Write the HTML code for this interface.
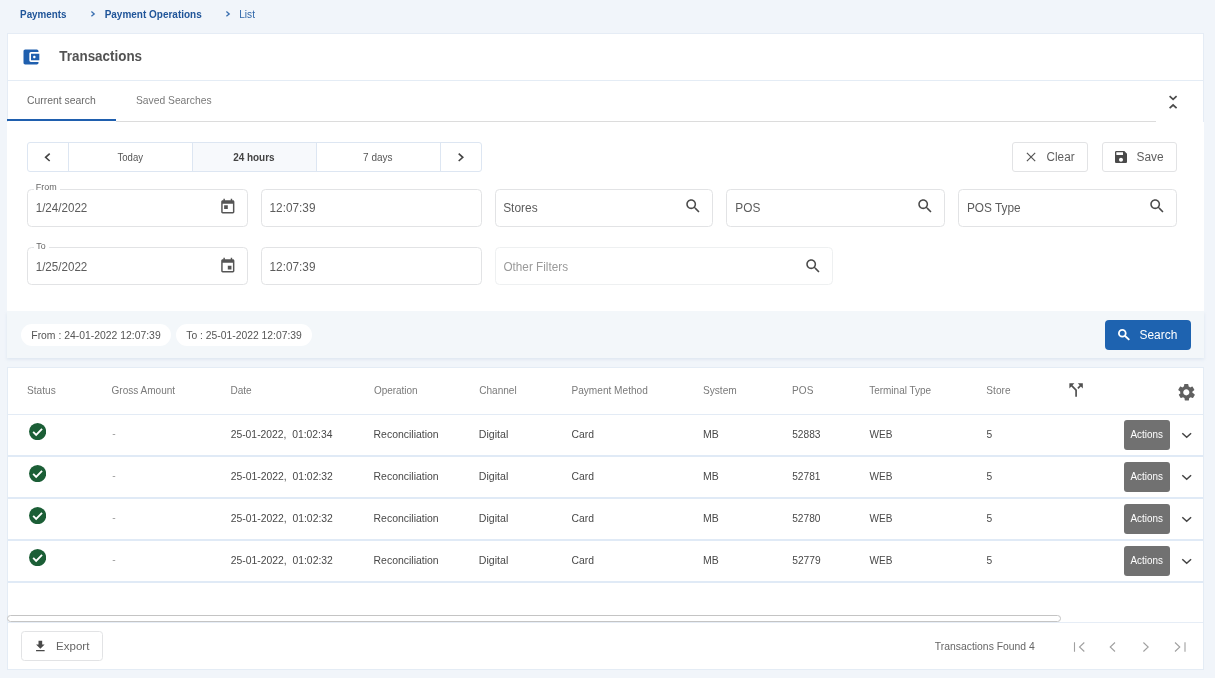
<!DOCTYPE html>
<html><head><meta charset="utf-8"><title>Transactions</title>
<style>
*{box-sizing:border-box;margin:0;padding:0}
html,body{width:1215px;height:678px;overflow:hidden}
body{background:#f1f5fa;font-family:"Liberation Sans",Arial,sans-serif;position:relative}
.abs{position:absolute}
.t{position:absolute;white-space:nowrap;line-height:20px;transform-origin:0 0}
#w{position:absolute;left:0;top:0;width:1215px;height:678px;filter:blur(.4px)}
</style></head><body><div id="w">
<svg class="abs" style="left:89.9px;top:10px" width="6" height="8" viewBox="0 0 6 8"><path d="M1.400 1.600L4.200 3.900 1.400 6.200" fill="none" stroke="#3a6fb0" stroke-width="1.300"/></svg>
<svg class="abs" style="left:225px;top:10px" width="6" height="8" viewBox="0 0 6 8"><path d="M1.400 1.600L4.200 3.900 1.400 6.200" fill="none" stroke="#3a6fb0" stroke-width="1.300"/></svg>
<div class="abs" style="left:6.8px;top:121px;width:1197.4px;height:189.5px;background:#fff"></div>
<div class="abs" style="left:6.8px;top:33.3px;width:1196.8px;height:88.7px;background:#fff;border:1px solid #e5ecf5;border-bottom:none"></div>
<div class="abs" style="left:6.8px;top:79.8px;width:1196.8px;height:1.0px;background:#e4ecf5"></div>
<svg class="abs" style="left:21.2px;top:46.8px" width="20" height="20" viewBox="0 0 24 24"><path fill="#1f5fae" d="M21 18v1c0 1.100-.9 2-2 2H5c-1.110 0-2-.9-2-2V5c0-1.100.890-2 2-2h14c1.100 0 2 .9 2 2v1h-9c-1.110 0-2 .9-2 2v8c0 1.100.890 2 2 2h9zm-9-2h10V8H12v8zm4-2.500c-.830 0-1.500-.670-1.500-1.500s.670-1.500 1.500-1.500 1.500.670 1.500 1.500-.670 1.500-1.500 1.500z"/></svg>
<div class="abs" style="left:116px;top:120.5px;width:1040px;height:1.0px;background:#dcdcdc"></div>
<div class="abs" style="left:6.8px;top:118.5px;width:109.2px;height:2.5px;background:#1f5fae"></div>
<svg class="abs" style="left:1167px;top:94px" width="12" height="16" viewBox="0 0 12 16"><path d="M2.600 2.200L6.100 5.400 9.600 2.200M2.600 14.200L6.100 11 9.600 14.200" fill="none" stroke="#4a4a4a" stroke-width="1.700"/></svg>
<div class="abs" style="left:27.3px;top:142px;width:454.4px;height:29.5px;background:#fff;border:1px solid #dde6f2;border-radius:3px"></div>
<div class="abs" style="left:192.5px;top:143px;width:123.5px;height:27.5px;background:#f7f9fc"></div>
<div class="abs" style="left:67.8px;top:143px;width:0.8000000000000114px;height:27.5px;background:#dde6f2"></div>
<div class="abs" style="left:191.79999999999998px;top:143px;width:0.8000000000000114px;height:27.5px;background:#dde6f2"></div>
<div class="abs" style="left:315.6px;top:143px;width:0.7999999999999545px;height:27.5px;background:#dde6f2"></div>
<div class="abs" style="left:439.8px;top:143px;width:0.7999999999999545px;height:27.5px;background:#dde6f2"></div>
<svg class="abs" style="left:42px;top:150.5px" width="11" height="12" viewBox="0 0 11 12"><path d="M7.700 2.600L3.600 6.300l4.100 3.700" fill="none" stroke="#444" stroke-width="1.600"/></svg>
<svg class="abs" style="left:455px;top:150.5px" width="11" height="12" viewBox="0 0 11 12"><path d="M3.700 2.600l4.100 3.700-4.100 3.700" fill="none" stroke="#444" stroke-width="1.600"/></svg>
<div class="abs" style="left:1012.3px;top:142px;width:75.70000000000005px;height:29.5px;background:#fff;border:1px solid #e2e3e5;border-radius:3px"></div>
<svg class="abs" style="left:1025px;top:151px" width="12" height="12" viewBox="0 0 12 12"><path d="M1.900 1.900l8.300 8.300M10.200 1.900l-8.300 8.300" stroke="#555" stroke-width="1.200" fill="none"/></svg>
<div class="abs" style="left:1102px;top:142px;width:75px;height:29.5px;background:#fff;border:1px solid #e2e3e5;border-radius:3px"></div>
<svg class="abs" style="left:1112.8px;top:148.8px" width="16" height="16" viewBox="0 0 24 24"><path fill="#4a4a4a" d="M17 3H5c-1.110 0-2 .9-2 2v14c0 1.100.890 2 2 2h14c1.100 0 2-.9 2-2V7l-4-4zm-5 16c-1.660 0-3-1.340-3-3s1.340-3 3-3 3 1.340 3 3-1.340 3-3 3zm3-10H5V5h10v4z"/></svg>
<div class="abs" style="left:27.3px;top:188.8px;width:220.6px;height:37.89999999999998px;background:#fff;border:1px solid #e2e3e5;border-radius:4.5px"></div>
<div class="abs" style="left:261.2px;top:188.8px;width:220.5px;height:37.89999999999998px;background:#fff;border:1px solid #e2e3e5;border-radius:4.5px"></div>
<div class="abs" style="left:27.3px;top:247.2px;width:220.6px;height:37.60000000000002px;background:#fff;border:1px solid #e2e3e5;border-radius:4.5px"></div>
<div class="abs" style="left:261.2px;top:247.2px;width:220.5px;height:37.60000000000002px;background:#fff;border:1px solid #e2e3e5;border-radius:4.5px"></div>
<div class="abs" style="left:494.8px;top:188.8px;width:218.2px;height:37.89999999999998px;background:#fff;border:1px solid #e2e3e5;border-radius:4.5px"></div>
<div class="abs" style="left:726.2px;top:188.8px;width:218.79999999999995px;height:37.89999999999998px;background:#fff;border:1px solid #e2e3e5;border-radius:4.5px"></div>
<div class="abs" style="left:958.3px;top:188.8px;width:218.70000000000005px;height:37.89999999999998px;background:#fff;border:1px solid #e2e3e5;border-radius:4.5px"></div>
<div class="abs" style="left:494.8px;top:247.2px;width:337.99999999999994px;height:37.60000000000002px;background:#fff;border:1px solid #eef0f1;border-radius:4.5px"></div>
<div class="abs" style="left:33.5px;top:187px;width:26.0px;height:5px;background:#fff"></div>
<div class="abs" style="left:33.5px;top:245.5px;width:15.0px;height:5.0px;background:#fff"></div>
<svg class="abs" style="left:218.7px;top:197.9px" width="17.6" height="17.6" viewBox="0 0 24 24"><path fill="#555" d="M19 3h-1V1h-2v2H8V1H6v2H5c-1.110 0-1.990.9-1.990 2L3 19c0 1.100.890 2 2 2h14c1.100 0 2-.9 2-2V5c0-1.100-.9-2-2-2zm0 16H5V8h14v11zM7 10h5v5H7z"/></svg>
<svg class="abs" style="left:218.7px;top:257.3px" width="17.6" height="17.6" viewBox="0 0 24 24"><path fill="#555" d="M17 12h-5v5h5v-5zM16 1v2H8V1H6v2H5c-1.110 0-1.990.9-1.990 2L3 19c0 1.100.890 2 2 2h14c1.100 0 2-.9 2-2V5c0-1.100-.9-2-2-2h-1V1h-2zm3 18H5V8h14v11z"/></svg>
<svg class="abs" style="left:684.1px;top:197.1px" width="18.2" height="18.2" viewBox="0 0 24 24"><path fill="#4a4a4a" d="M15.500 14h-.790l-.280-.270C15.410 12.590 16 11.110 16 9.500 16 5.910 13.090 3 9.500 3S3 5.910 3 9.500 5.910 16 9.500 16c1.610 0 3.090-.590 4.230-1.570l.270.280v.790l5 4.990L20.490 19l-4.990-5zm-6 0C7.010 14 5 11.990 5 9.500S7.010 5 9.500 5 14 7.010 14 9.500 11.990 14 9.500 14z"/></svg>
<svg class="abs" style="left:915.9000000000001px;top:197.1px" width="18.2" height="18.2" viewBox="0 0 24 24"><path fill="#4a4a4a" d="M15.500 14h-.790l-.280-.270C15.410 12.590 16 11.110 16 9.500 16 5.910 13.090 3 9.500 3S3 5.910 3 9.500 5.910 16 9.500 16c1.610 0 3.090-.590 4.230-1.570l.270.280v.790l5 4.990L20.490 19l-4.990-5zm-6 0C7.010 14 5 11.990 5 9.500S7.010 5 9.500 5 14 7.010 14 9.500 11.990 14 9.500 14z"/></svg>
<svg class="abs" style="left:1147.9px;top:197.1px" width="18.2" height="18.2" viewBox="0 0 24 24"><path fill="#4a4a4a" d="M15.500 14h-.790l-.280-.270C15.410 12.590 16 11.110 16 9.500 16 5.910 13.090 3 9.500 3S3 5.910 3 9.500 5.910 16 9.500 16c1.610 0 3.090-.590 4.230-1.570l.270.280v.790l5 4.990L20.490 19l-4.990-5zm-6 0C7.010 14 5 11.990 5 9.500S7.010 5 9.500 5 14 7.010 14 9.500 11.990 14 9.500 14z"/></svg>
<svg class="abs" style="left:803.7px;top:257.09999999999997px" width="18.2" height="18.2" viewBox="0 0 24 24"><path fill="#4a4a4a" d="M15.500 14h-.790l-.280-.270C15.410 12.590 16 11.110 16 9.500 16 5.910 13.090 3 9.500 3S3 5.910 3 9.500 5.910 16 9.500 16c1.610 0 3.090-.590 4.230-1.570l.270.280v.790l5 4.990L20.490 19l-4.990-5zm-6 0C7.010 14 5 11.990 5 9.500S7.010 5 9.500 5 14 7.010 14 9.500 11.990 14 9.500 14z"/></svg>
<div class="abs" style="left:6.8px;top:310.5px;width:1197.4px;height:47.69999999999999px;background:#f3f7fa;box-shadow:0 1.500px 3px rgba(170,190,215,.28)"></div>
<div class="abs" style="left:20.8px;top:324px;width:150.2px;height:22px;background:#fff;border-radius:11px"></div>
<div class="abs" style="left:176.2px;top:324px;width:136.2px;height:22px;background:#fff;border-radius:11px"></div>
<div class="abs" style="left:1105px;top:320px;width:85.70000000000005px;height:30.19999999999999px;background:#1e63b0;border-radius:4px"></div>
<svg class="abs" style="left:1116px;top:327px" width="16" height="16" viewBox="0 0 16 16"><circle cx="6.300" cy="6.300" r="3.400" fill="none" stroke="#fff" stroke-width="1.800"/><path d="M8.800 8.800L13.300 12.900" stroke="#fff" stroke-width="1.900" fill="none"/></svg>
<div class="abs" style="left:6.8px;top:366.5px;width:1197.2px;height:303.70000000000005px;background:#fff;border:1px solid #e4ecf5"></div>
<div class="abs" style="left:8px;top:414px;width:1195px;height:1px;background:#e3ebf5"></div>
<div class="abs" style="left:8px;top:454.9px;width:1195px;height:2.0px;background:#e0eaf6"></div>
<svg class="abs" style="left:29px;top:423.2px" width="17.2" height="17.2" viewBox="0 0 24 24"><circle cx="12" cy="12" r="12" fill="#1b5e36"/><path d="M5.800 12.400l4.200 4.200 8.200-8.300" fill="none" stroke="#fff" stroke-width="2.600"/></svg>
<div class="abs" style="left:1124.3px;top:419.7px;width:45.700000000000045px;height:30.100000000000023px;background:#717171;border-radius:3px"></div>
<svg class="abs" style="left:1180.6px;top:431.5px" width="12" height="8" viewBox="0 0 12 8"><path d="M1.300 1.200L5.700 5.300 10.100 1.200" fill="none" stroke="#444" stroke-width="1.500"/></svg>
<div class="abs" style="left:8px;top:496.79999999999995px;width:1195px;height:2.0px;background:#e0eaf6"></div>
<svg class="abs" style="left:29px;top:465.2px" width="17.2" height="17.2" viewBox="0 0 24 24"><circle cx="12" cy="12" r="12" fill="#1b5e36"/><path d="M5.800 12.400l4.200 4.200 8.200-8.300" fill="none" stroke="#fff" stroke-width="2.600"/></svg>
<div class="abs" style="left:1124.3px;top:461.7px;width:45.700000000000045px;height:30.100000000000023px;background:#717171;border-radius:3px"></div>
<svg class="abs" style="left:1180.6px;top:473.5px" width="12" height="8" viewBox="0 0 12 8"><path d="M1.300 1.200L5.700 5.300 10.100 1.200" fill="none" stroke="#444" stroke-width="1.500"/></svg>
<div class="abs" style="left:8px;top:538.6999999999999px;width:1195px;height:2.0px;background:#e0eaf6"></div>
<svg class="abs" style="left:29px;top:507.2px" width="17.2" height="17.2" viewBox="0 0 24 24"><circle cx="12" cy="12" r="12" fill="#1b5e36"/><path d="M5.800 12.400l4.200 4.200 8.200-8.300" fill="none" stroke="#fff" stroke-width="2.600"/></svg>
<div class="abs" style="left:1124.3px;top:503.7px;width:45.700000000000045px;height:30.099999999999966px;background:#717171;border-radius:3px"></div>
<svg class="abs" style="left:1180.6px;top:515.5px" width="12" height="8" viewBox="0 0 12 8"><path d="M1.300 1.200L5.700 5.300 10.100 1.200" fill="none" stroke="#444" stroke-width="1.500"/></svg>
<div class="abs" style="left:8px;top:580.5999999999999px;width:1195px;height:2.0px;background:#e0eaf6"></div>
<svg class="abs" style="left:29px;top:549.2px" width="17.2" height="17.2" viewBox="0 0 24 24"><circle cx="12" cy="12" r="12" fill="#1b5e36"/><path d="M5.800 12.400l4.200 4.200 8.200-8.300" fill="none" stroke="#fff" stroke-width="2.600"/></svg>
<div class="abs" style="left:1124.3px;top:545.7px;width:45.700000000000045px;height:30.09999999999991px;background:#717171;border-radius:3px"></div>
<svg class="abs" style="left:1180.6px;top:557.5px" width="12" height="8" viewBox="0 0 12 8"><path d="M1.300 1.200L5.700 5.300 10.100 1.200" fill="none" stroke="#444" stroke-width="1.500"/></svg>
<svg class="abs" style="left:1066.2px;top:380.1px" width="20.2" height="20.2" viewBox="0 0 24 24"><path fill="#505050" d="M14 4l2.290 2.290-2.880 2.880 1.420 1.420 2.880-2.880L20 10V4zm-4 0H4v6l2.290-2.290 4.710 4.700V20h2v-8.410l-5.290-5.300z"/></svg>
<svg class="abs" style="left:1175.9px;top:381.59999999999997px" width="20.6" height="20.6" viewBox="0 0 24 24"><path fill="#606060" d="M19.140 12.940c.040-.3.060-.610.060-.940 0-.320-.020-.640-.070-.940l2.030-1.580a.490.490 0 0 0 .120-.610l-1.920-3.320a.488.488 0 0 0-.590-.220l-2.390.960c-.500-.380-1.030-.700-1.620-.940l-.360-2.540a.484.484 0 0 0-.480-.410h-3.840c-.240 0-.430.170-.470.410l-.360 2.540c-.590.240-1.130.570-1.620.940l-2.390-.960c-.220-.080-.470 0-.590.220L2.740 8.870c-.120.210-.080.470.12.610l2.030 1.580c-.050.300-.090.630-.090.940s.2.640.7.940l-2.030 1.580a.490.490 0 0 0-.120.610l1.920 3.320c.120.220.370.290.590.220l2.390-.960c.500.380 1.030.700 1.620.940l.360 2.540c.5.240.240.410.480.410h3.840c.240 0 .440-.170.470-.410l.360-2.540c.590-.240 1.130-.560 1.620-.940l2.390.960c.220.080.470 0 .590-.220l1.920-3.320c.120-.220.070-.470-.120-.610l-2.010-1.580zM12 15.600c-1.980 0-3.600-1.620-3.600-3.600s1.620-3.600 3.600-3.600 3.600 1.620 3.600 3.600-1.620 3.600-3.600 3.600z"/></svg>
<div class="abs" style="left:7.2px;top:615.2px;width:1053.6px;height:7.099999999999909px;background:#fff;border:1.300px solid #c4c4c4;border-radius:3.5px"></div>
<div class="abs" style="left:8px;top:622px;width:1195px;height:1px;background:#e6edf6"></div>
<div class="abs" style="left:21px;top:631.1px;width:82px;height:29.899999999999977px;background:#fff;border:1px solid #e2e3e5;border-radius:3.5px"></div>
<svg class="abs" style="left:33.099999999999994px;top:638.9px" width="14.7" height="14.7" viewBox="0 0 24 24"><path fill="#4a4a4a" d="M19 9h-4V3H9v6H5l7 7 7-7zM5 18v2h14v-2H5z"/></svg>
<svg class="abs" style="left:1072px;top:640px" width="15" height="14" viewBox="0 0 15 14"><path d="M2.500 2.300v9.400M12.300 2.500L7.500 7l4.800 4.500" fill="none" stroke="#a0a0a0" stroke-width="1.100"/></svg>
<svg class="abs" style="left:1106px;top:640px" width="14" height="14" viewBox="0 0 14 14"><path d="M9 2.500L4.200 7l4.800 4.500" fill="none" stroke="#a0a0a0" stroke-width="1.100"/></svg>
<svg class="abs" style="left:1139px;top:640px" width="14" height="14" viewBox="0 0 14 14"><path d="M4.400 2.500L9.200 7l-4.800 4.500" fill="none" stroke="#a0a0a0" stroke-width="1.100"/></svg>
<svg class="abs" style="left:1172px;top:640px" width="15" height="14" viewBox="0 0 15 14"><path d="M13 2.300v9.400M3 2.500L7.800 7l-4.800 4.500" fill="none" stroke="#a0a0a0" stroke-width="1.100"/></svg>
<span class="t" style="left:20px;top:4px;font-size:11px;color:#205599;font-weight:bold;transform:translate(0.09px,0.00px) scaleX(0.8939)">Payments</span>
<span class="t" style="left:104px;top:4px;font-size:11px;color:#205599;font-weight:bold;transform:translate(0.66px,0.00px) scaleX(0.9077)">Payment Operations</span>
<span class="t" style="left:239px;top:4px;font-size:11px;color:#2f66a8;transform:translate(0.24px,0.00px) scaleX(0.9185)">List</span>
<span class="t" style="left:59px;top:46px;font-size:14px;color:#535353;font-weight:bold;transform:translate(0.37px,0.00px) scaleX(0.9569)">Transactions</span>
<span class="t" style="left:26px;top:90px;font-size:11px;color:#6a6a6a;transform:translate(0.91px,0.00px) scaleX(0.9463)">Current search</span>
<span class="t" style="left:135px;top:90px;font-size:11px;color:#7a7a7a;transform:translate(0.93px,0.00px) scaleX(0.9369)">Saved Searches</span>
<span class="t" style="left:117px;top:147px;font-size:10.5px;color:#555;transform:translate(0.49px,0.00px) scaleX(0.9101)">Today</span>
<span class="t" style="left:233px;top:147px;font-size:10.5px;color:#444;font-weight:bold;transform:translate(0.13px,0.00px) scaleX(0.9475)">24 hours</span>
<span class="t" style="left:363px;top:147px;font-size:10.5px;color:#555;transform:translate(0.11px,0.00px) scaleX(0.9513)">7 days</span>
<span class="t" style="left:1046px;top:147px;font-size:12px;color:#5e5e5e;transform:translate(0.56px,0.00px) scaleX(0.9757)">Clear</span>
<span class="t" style="left:1136px;top:147px;font-size:12px;color:#5e5e5e;transform:translate(0.48px,0.00px) scaleX(0.9913)">Save</span>
<span class="t" style="left:35px;top:177px;font-size:8.5px;color:#666;transform:translate(0.81px,0.00px) scaleX(1.0547)">From</span>
<span class="t" style="left:36px;top:236px;font-size:8.5px;color:#666;transform:translate(0.23px,0.00px) scaleX(1.0373)">To</span>
<span class="t" style="left:35px;top:197px;font-size:12.5px;color:#5c5c5c;transform:translate(0.69px,0.60px) scaleX(0.9284)">1/24/2022</span>
<span class="t" style="left:35px;top:257px;font-size:12.5px;color:#5c5c5c;transform:translate(0.69px,0.40px) scaleX(0.9284)">1/25/2022</span>
<span class="t" style="left:269px;top:197px;font-size:12.5px;color:#5c5c5c;transform:translate(0.56px,0.60px) scaleX(0.9436)">12:07:39</span>
<span class="t" style="left:269px;top:257px;font-size:12.5px;color:#5c5c5c;transform:translate(0.56px,0.40px) scaleX(0.9436)">12:07:39</span>
<span class="t" style="left:503px;top:197px;font-size:12.5px;color:#5c5c5c;transform:translate(0.14px,0.60px) scaleX(0.9545)">Stores</span>
<span class="t" style="left:735px;top:197px;font-size:12.5px;color:#5c5c5c;transform:translate(0.30px,0.60px) scaleX(0.9478)">POS</span>
<span class="t" style="left:966px;top:197px;font-size:12.5px;color:#5c5c5c;transform:translate(0.91px,0.60px) scaleX(0.9478)">POS Type</span>
<span class="t" style="left:503px;top:257px;font-size:12.5px;color:#9a9a9a;transform:translate(0.43px,0.40px) scaleX(0.9391)">Other Filters</span>
<span class="t" style="left:31px;top:325px;font-size:11px;color:#555;transform:translate(0.28px,0.00px) scaleX(0.9446)">From : 24-01-2022 12:07:39</span>
<span class="t" style="left:186px;top:325px;font-size:11px;color:#555;transform:translate(0.24px,0.00px) scaleX(0.9405)">To : 25-01-2022 12:07:39</span>
<span class="t" style="left:1139px;top:325px;font-size:12px;color:#fff;transform:translate(0.48px,0.00px) scaleX(0.9953)">Search</span>
<span class="t" style="left:27px;top:380px;font-size:11px;color:#7a7a7a;transform:translate(0.06px,0.40px) scaleX(0.9194)">Status</span>
<span class="t" style="left:111px;top:380px;font-size:11px;color:#7a7a7a;transform:translate(0.56px,0.40px) scaleX(0.9116)">Gross Amount</span>
<span class="t" style="left:230px;top:380px;font-size:11px;color:#7a7a7a;transform:translate(0.39px,0.40px) scaleX(0.9156)">Date</span>
<span class="t" style="left:373px;top:380px;font-size:11px;color:#7a7a7a;transform:translate(0.88px,0.40px) scaleX(0.9063)">Operation</span>
<span class="t" style="left:479px;top:380px;font-size:11px;color:#7a7a7a;transform:translate(0.23px,0.40px) scaleX(0.9137)">Channel</span>
<span class="t" style="left:571px;top:380px;font-size:11px;color:#7a7a7a;transform:translate(0.44px,0.40px) scaleX(0.9183)">Payment Method</span>
<span class="t" style="left:702px;top:380px;font-size:11px;color:#7a7a7a;transform:translate(0.88px,0.40px) scaleX(0.9237)">System</span>
<span class="t" style="left:792px;top:380px;font-size:11px;color:#7a7a7a;transform:translate(0.08px,0.40px) scaleX(0.9157)">POS</span>
<span class="t" style="left:869px;top:380px;font-size:11px;color:#7a7a7a;transform:translate(0.16px,0.40px) scaleX(0.9083)">Terminal Type</span>
<span class="t" style="left:986px;top:380px;font-size:11px;color:#7a7a7a;transform:translate(0.36px,0.40px) scaleX(0.9191)">Store</span>
<span class="t" style="left:112px;top:423px;font-size:11px;color:#999;transform:translate(0.20px,0.40px) scaleX(0.9300)">-</span>
<span class="t" style="left:230px;top:424px;font-size:11px;color:#484848;transform:translate(0.67px,0.40px) scaleX(0.9404)">25-01-2022,&nbsp; 01:02:34</span>
<span class="t" style="left:373px;top:424px;font-size:11px;color:#484848;transform:translate(0.55px,0.40px) scaleX(0.9504)">Reconciliation</span>
<span class="t" style="left:478px;top:424px;font-size:11px;color:#484848;transform:translate(0.76px,0.40px) scaleX(0.9644)">Digital</span>
<span class="t" style="left:571px;top:424px;font-size:11px;color:#484848;transform:translate(0.55px,0.40px) scaleX(0.9423)">Card</span>
<span class="t" style="left:703px;top:424px;font-size:11px;color:#484848;transform:translate(0.01px,0.40px) scaleX(0.9537)">MB</span>
<span class="t" style="left:792px;top:424px;font-size:11px;color:#484848;transform:translate(0.22px,0.40px) scaleX(0.9234)">52883</span>
<span class="t" style="left:869px;top:424px;font-size:11px;color:#484848;transform:translate(0.48px,0.40px) scaleX(0.9145)">WEB</span>
<span class="t" style="left:986px;top:424px;font-size:11px;color:#484848;transform:translate(0.61px,0.40px) scaleX(0.9300)">5</span>
<span class="t" style="left:1130px;top:424px;font-size:10.5px;color:#fff;transform:translate(0.45px,0.40px) scaleX(0.9405)">Actions</span>
<span class="t" style="left:112px;top:465px;font-size:11px;color:#999;transform:translate(0.20px,0.40px) scaleX(0.9300)">-</span>
<span class="t" style="left:230px;top:466px;font-size:11px;color:#484848;transform:translate(0.67px,0.40px) scaleX(0.9439)">25-01-2022,&nbsp; 01:02:32</span>
<span class="t" style="left:373px;top:466px;font-size:11px;color:#484848;transform:translate(0.55px,0.40px) scaleX(0.9504)">Reconciliation</span>
<span class="t" style="left:478px;top:466px;font-size:11px;color:#484848;transform:translate(0.76px,0.40px) scaleX(0.9644)">Digital</span>
<span class="t" style="left:571px;top:466px;font-size:11px;color:#484848;transform:translate(0.55px,0.40px) scaleX(0.9423)">Card</span>
<span class="t" style="left:703px;top:466px;font-size:11px;color:#484848;transform:translate(0.01px,0.40px) scaleX(0.9537)">MB</span>
<span class="t" style="left:792px;top:466px;font-size:11px;color:#484848;transform:translate(0.22px,0.40px) scaleX(0.9243)">52781</span>
<span class="t" style="left:869px;top:466px;font-size:11px;color:#484848;transform:translate(0.48px,0.40px) scaleX(0.9145)">WEB</span>
<span class="t" style="left:986px;top:466px;font-size:11px;color:#484848;transform:translate(0.61px,0.40px) scaleX(0.9300)">5</span>
<span class="t" style="left:1130px;top:466px;font-size:10.5px;color:#fff;transform:translate(0.45px,0.40px) scaleX(0.9405)">Actions</span>
<span class="t" style="left:112px;top:507px;font-size:11px;color:#999;transform:translate(0.20px,0.40px) scaleX(0.9300)">-</span>
<span class="t" style="left:230px;top:508px;font-size:11px;color:#484848;transform:translate(0.67px,0.40px) scaleX(0.9439)">25-01-2022,&nbsp; 01:02:32</span>
<span class="t" style="left:373px;top:508px;font-size:11px;color:#484848;transform:translate(0.55px,0.40px) scaleX(0.9504)">Reconciliation</span>
<span class="t" style="left:478px;top:508px;font-size:11px;color:#484848;transform:translate(0.76px,0.40px) scaleX(0.9644)">Digital</span>
<span class="t" style="left:571px;top:508px;font-size:11px;color:#484848;transform:translate(0.55px,0.40px) scaleX(0.9423)">Card</span>
<span class="t" style="left:703px;top:508px;font-size:11px;color:#484848;transform:translate(0.01px,0.40px) scaleX(0.9537)">MB</span>
<span class="t" style="left:792px;top:508px;font-size:11px;color:#484848;transform:translate(0.22px,0.40px) scaleX(0.9231)">52780</span>
<span class="t" style="left:869px;top:508px;font-size:11px;color:#484848;transform:translate(0.48px,0.40px) scaleX(0.9145)">WEB</span>
<span class="t" style="left:986px;top:508px;font-size:11px;color:#484848;transform:translate(0.61px,0.40px) scaleX(0.9300)">5</span>
<span class="t" style="left:1130px;top:508px;font-size:10.5px;color:#fff;transform:translate(0.45px,0.40px) scaleX(0.9405)">Actions</span>
<span class="t" style="left:112px;top:549px;font-size:11px;color:#999;transform:translate(0.20px,0.40px) scaleX(0.9300)">-</span>
<span class="t" style="left:230px;top:550px;font-size:11px;color:#484848;transform:translate(0.67px,0.40px) scaleX(0.9439)">25-01-2022,&nbsp; 01:02:32</span>
<span class="t" style="left:373px;top:550px;font-size:11px;color:#484848;transform:translate(0.55px,0.40px) scaleX(0.9504)">Reconciliation</span>
<span class="t" style="left:478px;top:550px;font-size:11px;color:#484848;transform:translate(0.76px,0.40px) scaleX(0.9644)">Digital</span>
<span class="t" style="left:571px;top:550px;font-size:11px;color:#484848;transform:translate(0.55px,0.40px) scaleX(0.9423)">Card</span>
<span class="t" style="left:703px;top:550px;font-size:11px;color:#484848;transform:translate(0.01px,0.40px) scaleX(0.9537)">MB</span>
<span class="t" style="left:792px;top:550px;font-size:11px;color:#484848;transform:translate(0.22px,0.40px) scaleX(0.9310)">52779</span>
<span class="t" style="left:869px;top:550px;font-size:11px;color:#484848;transform:translate(0.48px,0.40px) scaleX(0.9145)">WEB</span>
<span class="t" style="left:986px;top:550px;font-size:11px;color:#484848;transform:translate(0.61px,0.40px) scaleX(0.9300)">5</span>
<span class="t" style="left:1130px;top:550px;font-size:10.5px;color:#fff;transform:translate(0.45px,0.40px) scaleX(0.9405)">Actions</span>
<span class="t" style="left:56px;top:636px;font-size:11.5px;color:#666;transform:translate(0.10px,0.00px) scaleX(0.9999)">Export</span>
<span class="t" style="left:934px;top:636px;font-size:11px;color:#666;transform:translate(0.84px,0.00px) scaleX(0.9428)">Transactions Found 4</span>
</div></body></html>
